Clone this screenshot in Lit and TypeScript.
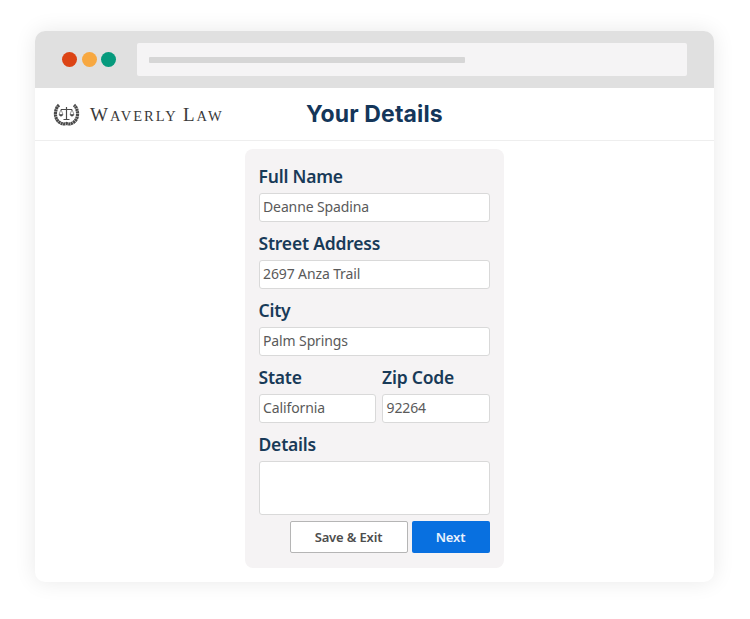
import { LitElement, html, css } from "lit";
import { customElement } from "lit/decorators.js";

@customElement("app-root")
export class AppRoot extends LitElement {
  static styles = css`
    :host { display: block; width: 750px; height: 619px; background: #fff; font-family: "Noto Sans", sans-serif; overflow: hidden; }
    .page { padding: 31px 36px 37px 35px; box-sizing: border-box; height: 619px; }
    .win { height: 551px; border-radius: 10px; background: #fff; box-shadow: 0 0 22px rgba(0,0,0,.09); overflow: hidden; display: flex; flex-direction: column; }
    .chrome { height: 57px; flex: none; background: #e0e0e0; display: flex; align-items: center; padding: 0 27px; box-sizing: border-box; }
    .dots { display: flex; gap: 4.5px; margin-right: 21px; }
    .dot { width: 15px; height: 15px; border-radius: 50%; }
    .red { background: #dc4415; } .amber { background: #f7a841; } .green { background: #069a7d; }
    .addr { flex: 1; height: 33px; background: #f5f4f5; border-radius: 2px; display: flex; align-items: center; padding-left: 12px; }
    .line { width: 316px; height: 6px; background: #d6d6d6; border-radius: 1px; }
    .nav { height: 53px; flex: none; border-bottom: 1px solid #eeeeee; display: flex; align-items: center; padding-left: 18px; box-sizing: border-box; }
    .logo { display: flex; align-items: center; gap: 10px; color: #3a3a3a; font-family: "Liberation Serif", serif; font-size: 14.5px; text-transform: uppercase; letter-spacing: 2.05px; width: 253px; flex: none; margin-top: 1px; }
    .logo .cap { font-size: 19px; }
    .logo svg { flex: none; margin-top: -2px; }
    h1 { margin: 0; font-family: Inter, sans-serif; font-weight: 700; font-size: 23px; color: #14365a; letter-spacing: .15px; }
    .content { display: flex; justify-content: center; padding-top: 8px; padding-right: 1px; }
    .card { width: 259px; height: 419px; background: #f5f3f4; border-radius: 8px; padding: 14px 14px 0; box-sizing: border-box; display: flex; flex-direction: column; }
    .field { display: flex; flex-direction: column; margin-bottom: 8px; min-width: 0; }
    label { font-size: 17.5px; font-weight: 600; line-height: 26px; height: 30px; color: #183a58; letter-spacing: -.2px; }
    .input { height: 29px; box-sizing: border-box; background: #fff; border: 1.5px solid #d9d9d9; border-radius: 3px; font-size: 14px; color: #5a5a5a; line-height: 26px; padding-left: 3.5px; letter-spacing: -.12px; }
    .area { height: 54px; }
    .row { display: flex; gap: 6.5px; }
    .row .field:first-child { width: 117px; flex: none; }
    .row .field:last-child { flex: 1; }
    .actions { display: flex; justify-content: flex-end; gap: 4px; margin-top: -2px; }
    .btn { height: 32px; box-sizing: border-box; border-radius: 2px; font-size: 13px; font-weight: 600; letter-spacing: -.15px; display: flex; align-items: center; justify-content: center; }
    .save { width: 118px; background: #fff; border: 1px solid #b5b5b5; color: #4d4d4d; }
    .next { width: 78px; background: #0870e0; color: #e8f2fd; }
  `;

  private field(name: string, value: string) {
    return html`<div class="field"><label>${name}</label><div class="input">${value}</div></div>`;
  }

  render() {
    return html`<div class="page"><div class="win">
      <div class="chrome">
        <div class="dots"><span class="dot red"></span><span class="dot amber"></span><span class="dot green"></span></div>
        <div class="addr"><div class="line"></div></div>
      </div>
      <div class="nav">
        <div class="logo">
          <svg width="27" height="24" viewBox="0 0 27 24" fill="none" stroke="#4a4a4a">
            <path d="M6 3C1.500 7 1 16 6 20C8.500 22 11 22.500 13.500 21.500C16 22.500 18.500 22 21 20C26 16 25.500 7 21 3" stroke-width="3.200" stroke-dasharray="2.200 .4"/>
            <path d="M13.500 5V17.500M10.500 17.500H16.500M8 7.500H19" stroke-width="1.200"/>
            <path d="M8 7.500L6 12.500H10ZM19 7.500L17 12.500H21Z" stroke-width=".6"/>
            <path d="M6 12.500C6.300 15 9.700 15 10 12.500ZM17 12.500C17.300 15 20.700 15 21 12.500Z" fill="#4a4a4a" stroke="none"/>
          </svg>
          <span><span class="cap">W</span>averly <span class="cap">L</span>aw</span>
        </div>
        <h1>Your Details</h1>
      </div>
      <div class="content"><div class="card">
        ${this.field("Full Name", "Deanne Spadina")}
        ${this.field("Street Address", "2697 Anza Trail")}
        ${this.field("City", "Palm Springs")}
        <div class="row">${this.field("State", "California")}${this.field("Zip Code", "92264")}</div>
        <div class="field"><label>Details</label><div class="input area"></div></div>
        <div class="actions"><div class="btn save">Save &amp; Exit</div><div class="btn next">Next</div></div>
      </div></div>
    </div></div>`;
  }
}
